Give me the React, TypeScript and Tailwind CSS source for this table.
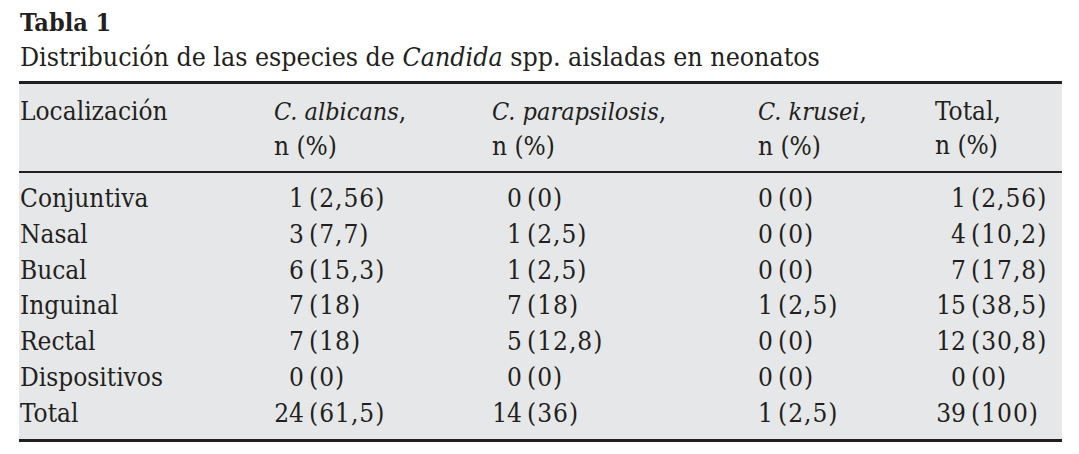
type Cell = [string, string]

const rows: { label: string; cells: Cell[] }[] = [
  { label: 'Conjuntiva', cells: [['1', '2,56'], ['0', '0'], ['0', '0'], ['1', '2,56']] },
  { label: 'Nasal', cells: [['3', '7,7'], ['1', '2,5'], ['0', '0'], ['4', '10,2']] },
  { label: 'Bucal', cells: [['6', '15,3'], ['1', '2,5'], ['0', '0'], ['7', '17,8']] },
  { label: 'Inguinal', cells: [['7', '18'], ['7', '18'], ['1', '2,5'], ['15', '38,5']] },
  { label: 'Rectal', cells: [['7', '18'], ['5', '12,8'], ['0', '0'], ['12', '30,8']] },
  { label: 'Dispositivos', cells: [['0', '0'], ['0', '0'], ['0', '0'], ['0', '0']] },
  { label: 'Total', cells: [['24', '61,5'], ['14', '36'], ['1', '2,5'], ['39', '100']] },
]

// width of the number box per column, so the "(" lines up
const numBox = ['w-[30px]', 'w-[30px]', 'w-[15px]', 'w-[31px]']

function Value({ cell, col }: { cell: Cell; col: number }) {
  return (
    <span className="whitespace-nowrap">
      <span className={`inline-block text-right ${numBox[col]}`}>{cell[0]}</span>
      <span className="ml-[5px] tracking-[1px]">({cell[1]})</span>
    </span>
  )
}

const gridCols = 'grid grid-cols-[254px_218px_266px_177px_1fr]'

export default function App() {
  return (
    <div className="w-[1079px] h-[454px] bg-white text-[#231f20] font-['DejaVu_Serif_Condensed','DejaVu_Serif',serif] font-stretch-condensed">
      <div className="pl-[19px] w-[1062px]">
        <h1 className="pt-[6px] pl-[1px] text-[25px] leading-[33px] font-bold">Tabla 1</h1>
        <p className="pl-[1px] text-[26.5px] leading-[36px]">
          Distribución de las especies de <i>Candida</i> spp. aisladas en neonatos
        </p>
        <div className="mt-[6px] border-t-[3px] border-b-[3px] border-[#231f20] bg-[#e6e7e8]">
          {/* header */}
          <div className={`${gridCols} pl-[1px] pt-[10px] pb-[8px] text-[26px] leading-[34px] border-b-[2px] border-[#231f20]`}>
            <div>Localización</div>
            <div>
              <i className="text-[25px]">C. albicans</i>,<br />n (%)
            </div>
            <div>
              <i className="text-[25px]">C. parapsilosis</i>,<br />n (%)
            </div>
            <div>
              <i className="text-[25px]">C. krusei</i>,<br />n (%)
            </div>
            <div>
              Total,<br />n (%)
            </div>
          </div>
          {/* body */}
          <div className="pl-[1px] pt-[8px] pb-[7px] text-[26px] leading-[35.8px]">
            {rows.map((r) => (
              <div key={r.label} className={gridCols}>
                <div>{r.label}</div>
                {r.cells.map((c, i) => (
                  <div key={i}>
                    <Value cell={c} col={i} />
                  </div>
                ))}
              </div>
            ))}
          </div>
        </div>
      </div>
    </div>
  )
}
